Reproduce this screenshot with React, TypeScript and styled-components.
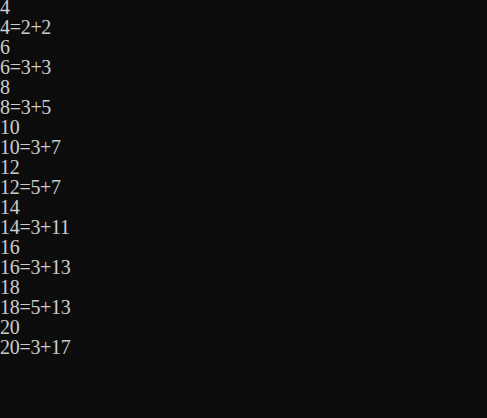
import React from "react";
import styled, { createGlobalStyle } from "styled-components";

const Global = createGlobalStyle`
  html, body { margin: 0; padding: 0; background: #0c0c0c; }
  body { width: 487px; height: 418px; overflow: hidden; }
`;

const Console = styled.div`
  width: 487px;
  height: 418px;
  background: #0c0c0c;
  color: #cccccc;
  font-family: "Liberation Serif", "Times New Roman", serif;
  font-size: 20px;
  line-height: 20px;
  box-sizing: border-box;
  overflow: hidden;
`;

const Output = styled.div`
  margin-top: -3px;
  display: flex;
  flex-direction: column;
`;

const Line = styled.div`
  height: 20px;
  white-space: pre;
  letter-spacing: -0.3px;
`;

const lines: string[] = [];
const pairs: [number, string][] = [
  [4, "2+2"],
  [6, "3+3"],
  [8, "3+5"],
  [10, "3+7"],
  [12, "5+7"],
  [14, "3+11"],
  [16, "3+13"],
  [18, "5+13"],
  [20, "3+17"],
];
pairs.forEach(([n, s]) => {
  lines.push(String(n));
  lines.push(`${n}=${s}`);
});

export default function App() {
  return (
    <>
      <Global />
      <Console>
        <Output>
          {lines.map((l, i) => (
            <Line key={i}>{l}</Line>
          ))}
        </Output>
      </Console>
    </>
  );
}
